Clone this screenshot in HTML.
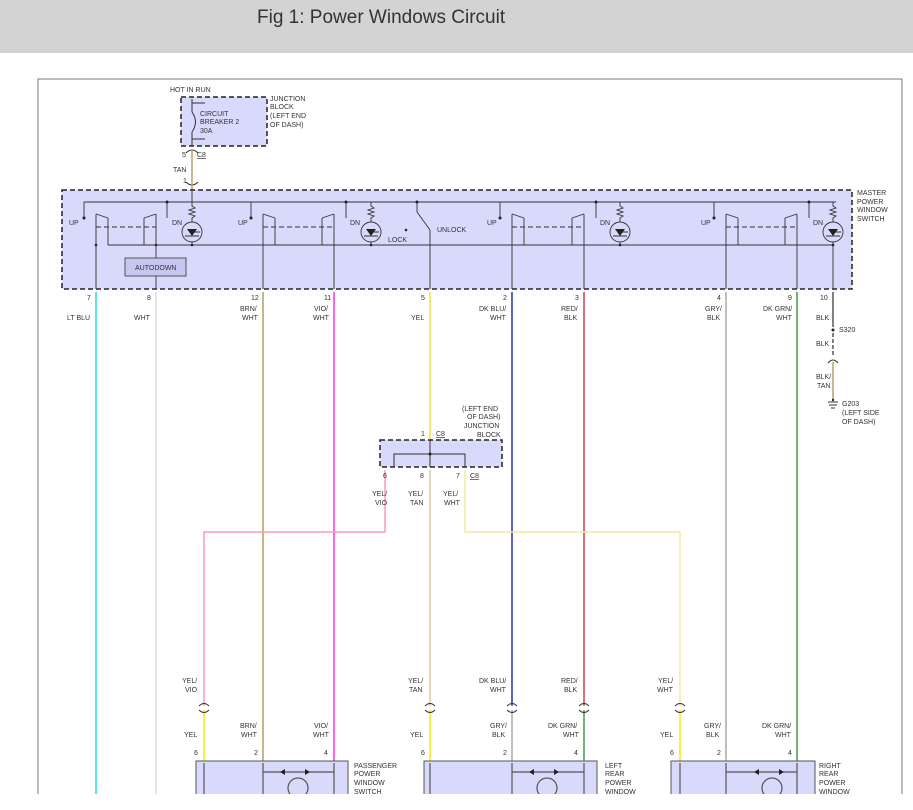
<!DOCTYPE html>
<html><head><meta charset="utf-8"><style>
html,body{margin:0;padding:0;background:#fff;width:913px;height:810px;overflow:hidden}
.hdr{position:absolute;left:0;top:0;width:913px;height:53px;background:#d3d3d3}
.hdr span{position:absolute;left:257px;top:7px;font:19px "Liberation Sans",sans-serif;color:#333}
svg{position:absolute;left:0;top:0}
text{font-family:"Liberation Sans",sans-serif;font-size:7px;fill:#333}
</style></head><body>
<div class="hdr"><span>Fig 1: Power Windows Circuit</span></div>
<svg width="913" height="810" viewBox="0 0 913 810">
<rect x="38" y="79" width="864" height="730" fill="none" stroke="#777" stroke-width="1"/>
<rect x="181" y="97" width="86" height="49" fill="#d9d9fb" stroke="#222" stroke-dasharray="5,3" stroke-width="1.5"/>
<text x="170" y="92">HOT IN RUN</text>
<text x="270" y="101">JUNCTION</text><text x="270" y="109">BLOCK</text><text x="270" y="118">(LEFT END</text><text x="270" y="127">OF DASH)</text>
<text x="200" y="116">CIRCUIT</text><text x="200" y="124">BREAKER 2</text><text x="200" y="133">30A</text>
<g stroke="#333" fill="none"><line x1="192" y1="99" x2="192" y2="112"/><path d="M192 112 Q199 122 192 132"/><line x1="192" y1="132" x2="192" y2="146"/>
<line x1="192" y1="103" x2="205" y2="103"/><line x1="192" y1="139" x2="205" y2="139"/>
<path d="M186 153 Q192 147 198 153"/><path d="M186 182 Q192 188 198 182"/></g>
<text x="182" y="157">5</text><text x="197" y="157" text-decoration="underline">C8</text>
<text x="173" y="172">TAN</text><text x="183" y="183">1</text>
<line x1="192" y1="150" x2="192" y2="190" stroke="#b8a070" stroke-width="1.5"/>
<rect x="62" y="190" width="790" height="99" fill="#d9d9fb" stroke="#222" stroke-dasharray="5,3" stroke-width="1.5"/>
<text x="857" y="195">MASTER</text><text x="857" y="204">POWER</text><text x="857" y="212">WINDOW</text><text x="857" y="221">SWITCH</text>
<g stroke="#333" fill="none" stroke-width="0.9">
<line x1="84" y1="202" x2="836" y2="202"/>
<line x1="108" y1="245" x2="833" y2="245"/>
<line x1="192" y1="190" x2="192" y2="202"/>
</g>
<g stroke="#333" fill="none" stroke-width="0.9">
<line x1="84" y1="202" x2="84" y2="218"/><line x1="96" y1="214" x2="96" y2="289"/><line x1="96" y1="214" x2="108" y2="218"/><line x1="108" y1="218" x2="108" y2="245"/>
<line x1="96" y1="227" x2="156" y2="227" stroke-dasharray="5,3"/><line x1="156" y1="214" x2="156" y2="289"/><line x1="156" y1="214" x2="144" y2="218"/><line x1="144" y1="218" x2="144" y2="245"/>
<line x1="167" y1="202" x2="167" y2="218"/>
<path d="M192 202 v4 l3 2 -6 2 6 2 -6 2 6 2 -3 2 v4"/><circle cx="192" cy="232" r="10"/><line x1="192" y1="242" x2="192" y2="245"/>
<line x1="251" y1="202" x2="251" y2="218"/><line x1="263" y1="214" x2="263" y2="289"/><line x1="263" y1="214" x2="275" y2="218"/><line x1="275" y1="218" x2="275" y2="245"/>
<line x1="263" y1="227" x2="334" y2="227" stroke-dasharray="5,3"/><line x1="334" y1="214" x2="334" y2="289"/><line x1="334" y1="214" x2="322" y2="218"/><line x1="322" y1="218" x2="322" y2="245"/>
<line x1="346" y1="202" x2="346" y2="218"/>
<path d="M371 202 v4 l3 2 -6 2 6 2 -6 2 6 2 -3 2 v4"/><circle cx="371" cy="232" r="10"/><line x1="371" y1="242" x2="371" y2="245"/>
<line x1="417" y1="202" x2="417" y2="212"/><line x1="417" y1="212" x2="430" y2="230"/><line x1="430" y1="230" x2="430" y2="289"/>
<line x1="500" y1="202" x2="500" y2="218"/><line x1="512" y1="214" x2="512" y2="289"/><line x1="512" y1="214" x2="524" y2="218"/><line x1="524" y1="218" x2="524" y2="245"/>
<line x1="512" y1="227" x2="584" y2="227" stroke-dasharray="5,3"/><line x1="584" y1="214" x2="584" y2="289"/><line x1="584" y1="214" x2="572" y2="218"/><line x1="572" y1="218" x2="572" y2="245"/>
<line x1="596" y1="202" x2="596" y2="218"/>
<path d="M620 202 v4 l3 2 -6 2 6 2 -6 2 6 2 -3 2 v4"/><circle cx="620" cy="232" r="10"/><line x1="620" y1="242" x2="620" y2="245"/>
<line x1="714" y1="202" x2="714" y2="218"/><line x1="726" y1="214" x2="726" y2="289"/><line x1="726" y1="214" x2="738" y2="218"/><line x1="738" y1="218" x2="738" y2="245"/>
<line x1="726" y1="227" x2="797" y2="227" stroke-dasharray="5,3"/><line x1="797" y1="214" x2="797" y2="289"/><line x1="797" y1="214" x2="785" y2="218"/><line x1="785" y1="218" x2="785" y2="245"/>
<line x1="809" y1="202" x2="809" y2="218"/>
<path d="M833 202 v4 l3 2 -6 2 6 2 -6 2 6 2 -3 2 v4"/><circle cx="833" cy="232" r="10"/><line x1="833" y1="242" x2="833" y2="289"/>
<path d="M185 236h14 M364 236h14 M613 236h14 M826 236h14"/>
<path d="M194 232h6 M373 232h6 M622 232h6 M835 232h6"/>
</g>
<g fill="#222">
<circle cx="84" cy="218" r="1.5"/><circle cx="167" cy="202" r="1.5"/><circle cx="96" cy="245" r="1.3"/><circle cx="156" cy="245" r="1.3"/><circle cx="192" cy="245" r="1.3"/>
<circle cx="251" cy="218" r="1.5"/><circle cx="346" cy="202" r="1.5"/><circle cx="371" cy="245" r="1.3"/><circle cx="417" cy="202" r="1.5"/><circle cx="406" cy="230" r="1.3"/>
<circle cx="500" cy="218" r="1.5"/><circle cx="596" cy="202" r="1.5"/><circle cx="620" cy="245" r="1.3"/>
<circle cx="714" cy="218" r="1.5"/><circle cx="809" cy="202" r="1.5"/><circle cx="833" cy="245" r="1.3"/>
<path d="M187 229h10l-5 7z M366 229h10l-5 7z M615 229h10l-5 7z M828 229h10l-5 7z"/>
</g>
<rect x="125" y="258" width="61" height="18" fill="#c6c6f0" stroke="#555"/>
<text x="135" y="270">AUTODOWN</text>
<text x="69" y="225">UP</text><text x="172" y="225">DN</text><text x="238" y="225">UP</text><text x="350" y="225">DN</text>
<text x="388" y="242">LOCK</text><text x="437" y="232">UNLOCK</text>
<text x="487" y="225">UP</text><text x="600" y="225">DN</text><text x="701" y="225">UP</text><text x="813" y="225">DN</text>
<text x="87" y="300">7</text><text x="147" y="300">8</text><text x="251" y="300">12</text><text x="324" y="300">11</text><text x="421" y="300">5</text>
<text x="503" y="300">2</text><text x="575" y="300">3</text><text x="717" y="300">4</text><text x="788" y="300">9</text><text x="820" y="300">10</text>
<g stroke-width="1.5" fill="none">
<line x1="96" y1="292" x2="96" y2="800" stroke="#22dddd"/>
<line x1="156" y1="292" x2="156" y2="800" stroke="#ddd"/>
<line x1="263" y1="292" x2="263" y2="761" stroke="#b0a060"/>
<line x1="334" y1="292" x2="334" y2="761" stroke="#ff33dd"/>
<line x1="430" y1="292" x2="430" y2="440" stroke="#f0e040"/>
<line x1="512" y1="292" x2="512" y2="706" stroke="#2233aa"/>
<line x1="584" y1="292" x2="584" y2="706" stroke="#cc4444"/>
<line x1="726" y1="292" x2="726" y2="761" stroke="#aaa"/>
<line x1="797" y1="292" x2="797" y2="761" stroke="#449944"/>
<line x1="833" y1="292" x2="833" y2="327" stroke="#555"/>
<line x1="833" y1="333" x2="833" y2="355" stroke="#555" stroke-dasharray="4,2"/>
<line x1="833" y1="362" x2="833" y2="400" stroke="#b8a070"/>
<path d="M385 470 V532 H204 V706" stroke="#ff99bb"/>
<path d="M465 470 V532 H680 V706" stroke="#f0e8a0"/>
<line x1="430" y1="470" x2="430" y2="706" stroke="#d8c8a0"/>
<line x1="204" y1="710" x2="204" y2="761" stroke="#f0f000"/>
<line x1="430" y1="710" x2="430" y2="761" stroke="#f0f000"/>
<line x1="512" y1="710" x2="512" y2="761" stroke="#aaa"/>
<line x1="584" y1="710" x2="584" y2="761" stroke="#449944"/>
<line x1="680" y1="710" x2="680" y2="761" stroke="#f0f000"/>
</g>
<text x="67" y="320">LT BLU</text><text x="134" y="320">WHT</text>
<text x="240" y="311">BRN/</text><text x="242" y="320">WHT</text><text x="314" y="311">VIO/</text><text x="313" y="320">WHT</text>
<text x="411" y="320">YEL</text><text x="479" y="311">DK BLU/</text><text x="490" y="320">WHT</text>
<text x="561" y="311">RED/</text><text x="564" y="320">BLK</text><text x="705" y="311">GRY/</text><text x="707" y="320">BLK</text>
<text x="763" y="311">DK GRN/</text><text x="776" y="320">WHT</text><text x="816" y="320">BLK</text>
<circle cx="833" cy="330" r="1.5" fill="#222"/><text x="839" y="332">S320</text><text x="816" y="346">BLK</text>
<path d="M828 363 Q833 357 838 363" stroke="#333" fill="none"/>
<text x="816" y="379">BLK/</text><text x="817" y="388">TAN</text>
<g stroke="#333"><line x1="828" y1="402" x2="838" y2="402"/><line x1="829" y1="405" x2="837" y2="405"/><line x1="831" y1="408" x2="835" y2="408"/></g>
<circle cx="833" cy="400" r="1.2" fill="#222"/>
<text x="842" y="406">G203</text><text x="842" y="415">(LEFT SIDE</text><text x="842" y="424">OF DASH)</text>
<rect x="380" y="440" width="122" height="27" fill="#d9d9fb" stroke="#222" stroke-dasharray="5,3" stroke-width="1.5"/>
<g stroke="#333" fill="none"><path d="M394 467 V454 H465 V467"/><line x1="430" y1="440" x2="430" y2="467"/></g>
<circle cx="430" cy="454" r="1.5" fill="#222"/>
<text x="462" y="411">(LEFT END</text><text x="467" y="419">OF DASH)</text><text x="464" y="428">JUNCTION</text><text x="477" y="437">BLOCK</text>
<text x="421" y="436">1</text><text x="436" y="436" text-decoration="underline">C8</text>
<text x="383" y="478">6</text><text x="420" y="478">8</text><text x="456" y="478">7</text><text x="470" y="478" text-decoration="underline">C8</text>
<text x="372" y="496">YEL/</text><text x="375" y="505">VIO</text><text x="408" y="496">YEL/</text><text x="410" y="505">TAN</text><text x="443" y="496">YEL/</text><text x="444" y="505">WHT</text>
<text x="182" y="683">YEL/</text><text x="185" y="692">VIO</text><text x="408" y="683">YEL/</text><text x="409" y="692">TAN</text>
<text x="479" y="683">DK BLU/</text><text x="490" y="692">WHT</text><text x="561" y="683">RED/</text><text x="564" y="692">BLK</text>
<text x="658" y="683">YEL/</text><text x="657" y="692">WHT</text>
<text x="184" y="737">YEL</text><text x="240" y="728">BRN/</text><text x="241" y="737">WHT</text><text x="314" y="728">VIO/</text><text x="313" y="737">WHT</text>
<text x="410" y="737">YEL</text><text x="490" y="728">GRY/</text><text x="492" y="737">BLK</text><text x="548" y="728">DK GRN/</text><text x="563" y="737">WHT</text>
<text x="660" y="737">YEL</text><text x="704" y="728">GRY/</text><text x="706" y="737">BLK</text><text x="762" y="728">DK GRN/</text><text x="775" y="737">WHT</text>
<text x="194" y="755">6</text><text x="254" y="755">2</text><text x="324" y="755">4</text>
<text x="421" y="755">6</text><text x="503" y="755">2</text><text x="574" y="755">4</text>
<text x="670" y="755">6</text><text x="717" y="755">2</text><text x="788" y="755">4</text>
<g stroke="#333" fill="none">
<path d="M199 706 Q204 701 209 706 M199 710 Q204 715 209 710 M425 706 Q430 701 435 706 M425 710 Q430 715 435 710 M507 706 Q512 701 517 706 M507 710 Q512 715 517 710 M579 706 Q584 701 589 706 M579 710 Q584 715 589 710 M675 706 Q680 701 685 706 M675 710 Q680 715 685 710"/>
</g>
<rect x="196" y="761" width="152" height="40" fill="#d9d9fb" stroke="#555"/>
<rect x="424" y="761" width="173" height="40" fill="#d9d9fb" stroke="#555"/>
<rect x="671" y="761" width="144" height="40" fill="#d9d9fb" stroke="#555"/>
<g stroke="#555" stroke-width="1.2" fill="none">
<line x1="204" y1="763" x2="204" y2="800"/><line x1="263" y1="763" x2="263" y2="800"/><line x1="334" y1="763" x2="334" y2="800"/>
<line x1="430" y1="763" x2="430" y2="800"/><line x1="512" y1="763" x2="512" y2="800"/><line x1="584" y1="763" x2="584" y2="800"/>
<line x1="680" y1="763" x2="680" y2="800"/><line x1="726" y1="763" x2="726" y2="800"/><line x1="797" y1="763" x2="797" y2="800"/>
<line x1="263" y1="772" x2="334" y2="772"/><line x1="512" y1="772" x2="584" y2="772"/><line x1="726" y1="772" x2="797" y2="772"/>
<circle cx="298" cy="788" r="10"/><circle cx="547" cy="788" r="10"/><circle cx="772" cy="788" r="10"/>
</g>
<g fill="#222"><path d="M285 769 v6 l-5 -3z M305 769 v6 l5 -3z M534 769 v6 l-5 -3z M554 769 v6 l5 -3z M759 769 v6 l-5 -3z M779 769 v6 l5 -3z"/></g>
<text x="354" y="768">PASSENGER</text><text x="354" y="776">POWER</text><text x="354" y="785">WINDOW</text><text x="354" y="794">SWITCH</text>
<text x="605" y="768">LEFT</text><text x="605" y="776">REAR</text><text x="605" y="785">POWER</text><text x="605" y="794">WINDOW</text>
<text x="819" y="768">RIGHT</text><text x="819" y="776">REAR</text><text x="819" y="785">POWER</text><text x="819" y="794">WINDOW</text>
<rect x="0" y="794" width="913" height="16" fill="#fff"/>
</svg>
</body></html>
